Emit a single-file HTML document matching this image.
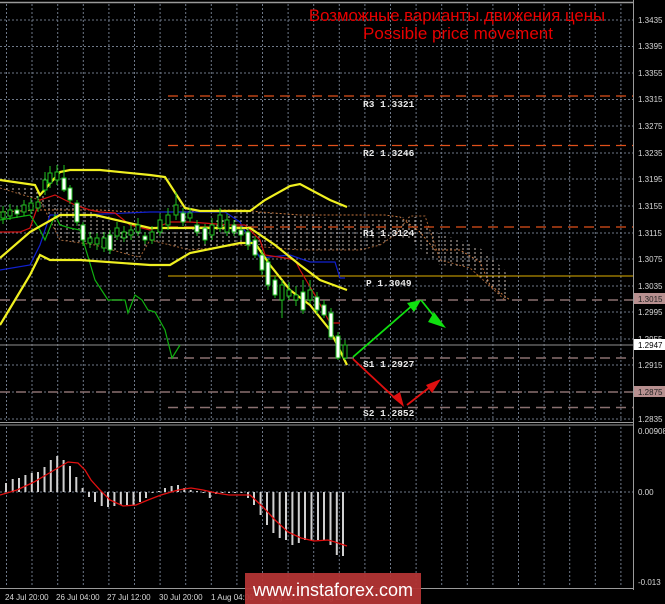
<!DOCTYPE html>
<html><head><meta charset="utf-8"><style>
html,body{margin:0;padding:0;background:#000;width:665px;height:604px;overflow:hidden}
svg{display:block}
.ax{font-family:"Liberation Sans",sans-serif;font-size:8px;fill:#d8d8d8}
.lv{font-family:"Liberation Mono",monospace;font-size:9.5px;font-weight:bold;fill:#e8e8e8}
</style></head><body>
<svg width="665" height="604" viewBox="0 0 665 604" xmlns="http://www.w3.org/2000/svg">
<defs>
<pattern id="hatch" width="6" height="4" patternUnits="userSpaceOnUse">
<line x1="1" y1="0" x2="1" y2="2" stroke="#e8d8d0" stroke-width="1" opacity="0.85"/>
</pattern>
</defs>
<rect width="665" height="604" fill="#000"/>
<line x1="0" y1="2.5" x2="634" y2="2.5" stroke="#9a9a9a" stroke-width="1.5"/>
<line x1="633.5" y1="0" x2="633.5" y2="590" stroke="#9a9a9a"/>
<line x1="0" y1="422.5" x2="634" y2="422.5" stroke="#9a9a9a"/>
<line x1="0" y1="425" x2="634" y2="425" stroke="#9a9a9a"/>
<line x1="0" y1="588.5" x2="634" y2="588.5" stroke="#9a9a9a"/>
<g stroke="#6e7888" stroke-width="1" stroke-dasharray="2 2">
<path d="M6.5 4V421M32 4V421M57.7 4V421M83.3 4V421M108.9 4V421M134.5 4V421M160.1 4V421M185.7 4V421M211.3 4V421M236.9 4V421M262.5 4V421M288.1 4V421M313.7 4V421M339.3 4V421M364.9 4V421M390.5 4V421M416.1 4V421M441.7 4V421M467.3 4V421M492.9 4V421M518.5 4V421M544.1 4V421M569.7 4V421M595.3 4V421M620.9 4V421"/>
<path d="M6.5 427V587M32 427V587M57.7 427V587M83.3 427V587M108.9 427V587M134.5 427V587M160.1 427V587M185.7 427V587M211.3 427V587M236.9 427V587M262.5 427V587M288.1 427V587M313.7 427V587M339.3 427V587M364.9 427V587M390.5 427V587M416.1 427V587M441.7 427V587M467.3 427V587M492.9 427V587M518.5 427V587M544.1 427V587M569.7 427V587M595.3 427V587M620.9 427V587"/>
<path d="M0 20H633M0 46.5H633M0 73H633M0 99.5H633M0 126H633M0 153H633M0 179H633M0 206H633M0 233H633M0 259H633M0 286H633M0 312H633M0 339H633M0 365H633M0 392H633M0 419H633M0 492H633"/>
</g>
<g stroke-dasharray="10 6" stroke-width="1.2">
<line x1="168" y1="96" x2="633" y2="96" stroke="#e0501a"/>
<line x1="168" y1="145.5" x2="633" y2="145.5" stroke="#e0501a"/>
<line x1="168" y1="227" x2="633" y2="227" stroke="#e0501a"/>
<line x1="0" y1="300" x2="633" y2="300" stroke="#8a7070" stroke-width="1.5"/>
<line x1="168" y1="358" x2="633" y2="358" stroke="#8a7070" stroke-width="1.5"/>
<line x1="0" y1="392" x2="633" y2="392" stroke="#8a7070" stroke-width="1.5"/>
<line x1="168" y1="407.5" x2="633" y2="407.5" stroke="#8a7070" stroke-width="1.5"/>
</g>
<line x1="168" y1="276" x2="633" y2="276" stroke="#e0b000" stroke-width="1"/>
<line x1="0" y1="345" x2="633" y2="345" stroke="#909090" stroke-width="1"/>
<path d="M0 185L35 187L55 205L90 210L120 230L190 230L240 212L260 212L330 218L390 218L420 217L430 230L480 248L505 270L510 300L520 300L505 300L490 285L470 268L440 265L410 240L395 235L380 245L360 250L300 250L260 245L240 245L190 250L150 240L140 257L130 255L95 245L60 240L40 200L0 188Z" fill="url(#hatch)"/>
<polyline points="0,212 40,210 100,210 130,212 180,212 220,210 245,210 260,212 300,215 330,215 385,215 400,217 420,232 435,250 460,250 480,262 490,285 510,300" fill="none" stroke="#c87840" stroke-dasharray="2 2"/>
<polyline points="0,188 40,200 60,240 95,245 130,255 140,257 150,240 190,250 240,245 300,250 360,250 380,245 395,235 410,216 425,216 440,260 470,268 505,300" fill="none" stroke="#c87840" stroke-dasharray="2 2" opacity="0.8"/>
<polyline points="0,270 30,265 40,245 50,215 80,215 150,212 225,212 240,222 260,258 290,255 310,262 335,262 340,278 345,278" fill="none" stroke="#1020d0" stroke-width="1.2"/>
<polyline points="0,232 20,232 30,228 40,200 55,195 75,205 90,210 100,212 115,213 130,225 150,230 170,222 190,222 230,225 245,225 260,240 265,255 285,258 295,260 300,270 315,295 330,323 340,323" fill="none" stroke="#d01010" stroke-width="1.2"/>
<polyline points="0,220 30,215 40,230 45,240 55,215 60,225 70,228 80,230 95,280 108,300 125,300 128,313 135,295 142,300 148,310 155,312 165,330 172,358 180,345" fill="none" stroke="#10b010" stroke-width="1.2"/>
<g fill="none" stroke="#f0f020" stroke-width="2.2">
<polyline points="0,180 35,185 40,195 60,172 70,170 100,170 150,175 165,177 185,208 200,211 250,211 265,200 290,186 300,184 330,200 347,207"/>
<polyline points="0,258 30,232 60,215 95,215 150,228 190,228 250,228 275,245 300,265 320,280 347,290"/>
<polyline points="0,325 15,300 30,275 40,255 50,260 80,260 150,265 170,265 190,253 240,243 255,243 270,265 290,290 310,305 330,330 347,365"/>
</g>
<g stroke-width="1">
<g stroke="#20c020" fill="#000">
<path d="M3 206V224M10 204V220M24 200V216M31 198V214M38 196V212M45 172V195M50 166V188M57 165V185M90 232V248M97 233V250M104 232V252M117 222V240M124 226V242M131 224V240M138 218V236M152 226V244M160 214V236M168 208V230M176 192V220M190 208V222M212 218V240M220 208V232M227 214V236M282 280V318M289 282V300M296 286V306M310 280V304M345 340V360"/>
<rect x="1" y="212" width="4" height="6"/><rect x="8" y="210" width="4" height="6"/><rect x="22" y="205" width="4" height="7"/><rect x="29" y="203" width="4" height="7"/><rect x="36" y="202" width="4" height="6"/><rect x="43" y="180" width="4" height="10"/><rect x="48" y="173" width="4" height="10"/><rect x="55" y="172" width="4" height="8"/><rect x="88" y="238" width="4" height="5"/><rect x="95" y="238" width="4" height="6"/><rect x="102" y="238" width="4" height="10"/><rect x="115" y="228" width="4" height="8"/><rect x="122" y="232" width="4" height="6"/><rect x="129" y="230" width="4" height="5"/><rect x="136" y="225" width="4" height="7"/><rect x="150" y="232" width="4" height="8"/><rect x="158" y="220" width="4" height="12"/><rect x="166" y="215" width="4" height="10"/><rect x="174" y="205" width="4" height="10"/><rect x="188" y="213" width="4" height="5"/><rect x="210" y="225" width="4" height="10"/><rect x="218" y="215" width="4" height="13"/><rect x="225" y="220" width="4" height="12"/><rect x="280" y="285" width="4" height="15"/><rect x="287" y="290" width="4" height="6"/><rect x="294" y="295" width="4" height="5"/><rect x="308" y="290" width="4" height="10"/><rect x="343" y="345" width="4" height="13"/>
</g>
<g stroke="#20c020" fill="#fff">
<path d="M17 206V218M64 165V192M70 185V204M77 200V226M83 222V246M110 230V254M145 232V244M183 208V226M197 220V236M205 224V244M234 220V236M241 226V240M248 228V250M255 236V258M262 250V275M268 258V290M275 276V298M303 280V314M317 292V314M324 300V318M331 308V340M338 332V360"/>
<rect x="15" y="210" width="4" height="4"/><rect x="62" y="178" width="4" height="12"/><rect x="68" y="188" width="4" height="12"/><rect x="75" y="203" width="4" height="19"/><rect x="81" y="225" width="4" height="15"/><rect x="108" y="235" width="4" height="15"/><rect x="143" y="236" width="4" height="4"/><rect x="181" y="213" width="4" height="9"/><rect x="195" y="225" width="4" height="7"/><rect x="203" y="228" width="4" height="12"/><rect x="232" y="225" width="4" height="7"/><rect x="239" y="230" width="4" height="5"/><rect x="246" y="232" width="4" height="13"/><rect x="253" y="240" width="4" height="15"/><rect x="260" y="255" width="4" height="15"/><rect x="266" y="262" width="4" height="23"/><rect x="273" y="280" width="4" height="15"/><rect x="301" y="292" width="4" height="18"/><rect x="315" y="297" width="4" height="13"/><rect x="322" y="305" width="4" height="10"/><rect x="329" y="313" width="4" height="24"/><rect x="336" y="336" width="4" height="22"/>
</g>
</g>
<g stroke-width="1.8" fill="none">
<polyline points="353,357 414,304" stroke="#10e010"/>
<polyline points="421,300 437,320" stroke="#10e010"/>
<polyline points="353,359 397,400" stroke="#e01010"/>
<polyline points="407,405 430,387" stroke="#e01010"/>
</g>
<polygon points="421,300 407,303 414,312" fill="#10e010"/>
<polygon points="446,328 434,312 428,322" fill="#10e010"/>
<polygon points="404,407 392,397 400,392" fill="#e01010"/>
<polygon points="441,379 432,393 426,385" fill="#e01010"/>
<text class="lv" x="363" y="107">R3 1.3321</text>
<text class="lv" x="363" y="156">R2 1.3246</text>
<text class="lv" x="363" y="236">R1 1.3124</text>
<text class="lv" x="366" y="286">P 1.3049</text>
<text class="lv" x="363" y="367">S1 1.2927</text>
<text class="lv" x="363" y="416">S2 1.2852</text>
<text x="457" y="21" text-anchor="middle" font-family="Liberation Sans,sans-serif" font-size="16.8" fill="#e80000">Возможные варианты движения цены</text>
<text x="458" y="39" text-anchor="middle" font-family="Liberation Sans,sans-serif" font-size="17" fill="#e80000">Possible price movement</text>
<g class="ax">
<text x="638" y="23">1.3435</text><text x="638" y="49">1.3395</text><text x="638" y="76">1.3355</text><text x="638" y="102">1.3315</text><text x="638" y="129">1.3275</text><text x="638" y="156">1.3235</text><text x="638" y="182">1.3195</text><text x="638" y="209">1.3155</text><text x="638" y="236">1.3115</text><text x="638" y="262">1.3075</text><text x="638" y="289">1.3035</text><text x="638" y="315">1.2995</text><text x="638" y="342">1.2955</text><text x="638" y="368">1.2915</text><text x="638" y="422">1.2835</text>
<text x="638" y="434">0.00908</text><text x="638" y="495">0.00</text><text x="638" y="585">-0.013</text>
</g>
<rect x="634" y="293" width="31" height="11" fill="#b89090"/><text x="638" y="302" font-family="Liberation Sans,sans-serif" font-size="8" fill="#222">1.3015</text>
<rect x="634" y="339" width="31" height="11" fill="#fff"/><text x="638" y="348" font-family="Liberation Sans,sans-serif" font-size="8" fill="#000">1.2947</text>
<rect x="634" y="386" width="31" height="11" fill="#b89090"/><text x="638" y="395" font-family="Liberation Sans,sans-serif" font-size="8" fill="#222">1.2875</text>
<g stroke="#d0d0d0" stroke-width="2">
<path d="M6 492V483M12.7 492V479M19 492V478M25.4 492V475M31.8 492V473M38 492V472M44.5 492V467M50.8 492V460M57.2 492V456M63.6 492V460M70 492V466M76.3 492V477M82.6 492V488M89 492V497M95 492V502M101.7 492V506M108 492V507M114.4 492V506M120.8 492V505M127 492V505M133.5 492V505M140 492V502M146 492V498M152.5 492V493M159 492V491M165 492V488M171.6 492V486M178 492V485M184.3 492V488M190.7 492V490M197 492V491M203.4 492V493M209.8 492V498M216 492V494M222.5 492V493M229 492V493M235 492V493M241.5 492V493M248 492V498M254 492V505M260.6 492V515M267 492V525M273.4 492V533M279.7 492V538M286 492V540M292.4 492V545M298.8 492V543M305 492V540M311.5 492V540M318 492V540M324 492V540M330.5 492V545M336.8 492V555M343 492V556"/>
</g>
<polyline points="0,495 17,490 34,482 51,472 68,462 78,463 85,470 91,480 100,490 110,500 123,506 136,505 148,500 161,495 178,490 191,488 203,490 216,493 229,495 241,495 250,495 263,507 275,520 288,532 301,538 314,541 328,540 335,542 347,546" fill="none" stroke="#e01010" stroke-width="1.3"/>
<g class="ax">
<text x="5" y="600">24 Jul 20:00</text><text x="56" y="600">26 Jul 04:00</text><text x="107" y="600">27 Jul 12:00</text><text x="159" y="600">30 Jul 20:00</text><text x="211" y="600">1 Aug 04:00</text><text x="262" y="600">2 Aug 12:00</text><text x="313" y="600">3 Aug 20:00</text>
</g>
<rect x="245" y="573" width="176" height="31" fill="#b23434" opacity="0.95"/>
<text x="333" y="596" text-anchor="middle" font-family="Liberation Sans,sans-serif" font-size="18" fill="#fff">www.instaforex.com</text>
</svg>
</body></html>
